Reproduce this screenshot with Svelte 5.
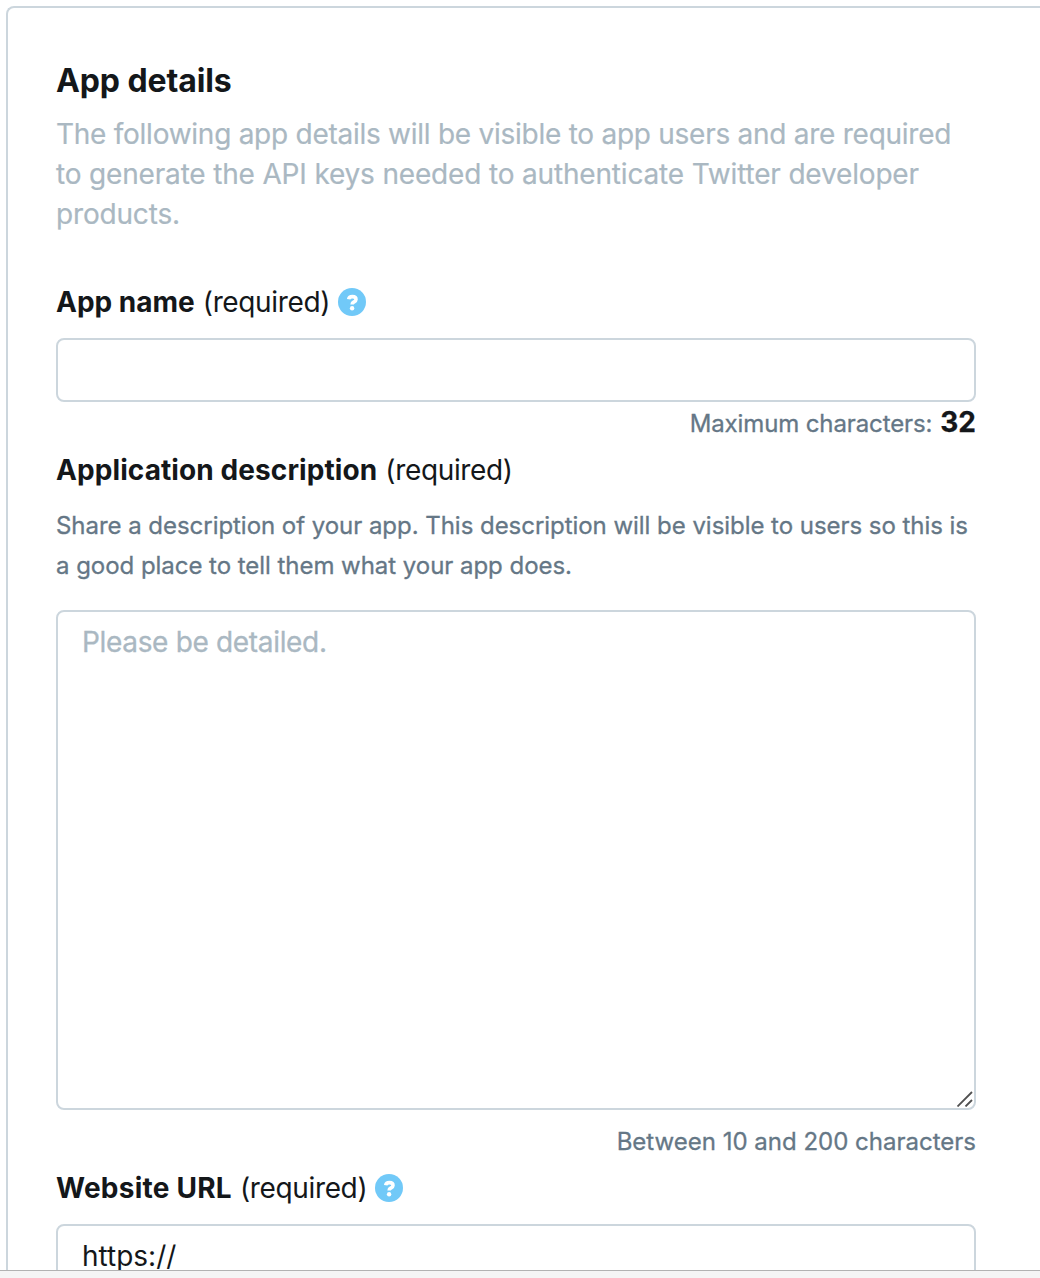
<script>
  let appName = $state('');
  let description = $state('');
  let url = $state('https://');
</script>

{#snippet help()}
  <svg class="help" viewBox="0 0 28 28" aria-hidden="true">
    <circle cx="14" cy="14" r="14" fill="#71c9f8" />
    <path d="M10.7 11.3C11 9.5 12.3 8.6 14.4 8.6c2.2 0 3.6 1.1 3.6 2.8 0 2.7-3.9 2.3-3.9 5" fill="none" stroke="#fff" stroke-width="3.6" stroke-linejoin="round" />
    <circle cx="14.1" cy="20.2" r="2.2" fill="#fff" />
  </svg>
{/snippet}

<main>
  <section class="card">
    <h1>App details</h1>
    <p class="intro">
      <span class="first">The following app details will be visible to app users and are required</span>
      <span>to generate the API keys needed to authenticate Twitter developer</span>
      <span>products.</span>
    </p>

    <div class="label"><label for="name">App name</label><span class="req">(required)</span>{@render help()}</div>
    <input id="name" bind:value={appName} />
    <div class="hint max"><span>Maximum characters:</span><b>32</b></div>

    <div class="label"><label class="long" for="desc">Application description</label><span class="req">(required)</span></div>
    <p class="note">
      <span>Share a description of your app. This description will be visible to users so this is</span>
      <span>a good place to tell them what your app does.</span>
    </p>
    <div class="area">
      <textarea id="desc" placeholder="Please be detailed." bind:value={description}></textarea>
      <svg class="grip" viewBox="0 0 16 16" aria-hidden="true">
        <path d="M.5 15.5 15 1M8.5 15.5 15 9" stroke="#505050" stroke-width="1.8" fill="none" />
      </svg>
    </div>
    <div class="hint range"><span>Between 10 and 200 characters</span></div>

    <div class="label"><label class="site" for="url">Website URL</label><span class="req">(required)</span>{@render help()}</div>
    <input id="url" bind:value={url} />
  </section>
  <footer></footer>
</main>

<style>
  :global(body) { background: #fff; overflow: hidden; }
  main {
    height: 1278px;
    box-sizing: border-box;
    padding: 6px 0 0 6px;
    display: flex;
    flex-direction: column;
    overflow: hidden;
    font-family: Inter, sans-serif;
    color: #14171a;
  }
  .card {
    flex: 1;
    min-height: 0;
    overflow: hidden;
    border: 2px solid #ccd6dd;
    border-width: 2px 0 0 2px;
    border-top-left-radius: 8px;
    padding: 48px 64px 0 48px;
  }
  h1 { margin: 0; font-size: 32px; line-height: 50px; height: 58px; font-weight: 700; letter-spacing: -0.1px; }
  p { margin: 0; white-space: nowrap; line-height: 40px; }
  p span { display: block; }
  .intro { font-size: 28px; color: #aab8c2; letter-spacing: -0.17px; -webkit-text-stroke: 0.2px; }
  .intro .first { letter-spacing: -0.26px; }
  .label { display: flex; align-items: center; height: 40px; margin-top: 48px; font-size: 28px; white-space: nowrap; }
  .label label { font-weight: 700; }
  .label .long { letter-spacing: 0.09px; }
  .label .site { letter-spacing: 0.24px; }
  .req { margin-left: 8px; letter-spacing: -0.35px; }
  .help { width: 28px; height: 28px; margin-left: 8px; }
  input, textarea {
    display: block;
    box-sizing: border-box;
    width: 920px;
    border: 2px solid #ccd6dd;
    border-radius: 8px;
    padding: 0 24px;
    background: #fff;
    color: inherit;
    font: 28px Inter, sans-serif;
    outline: none;
  }
  input { height: 64px; margin-top: 16px; }
  .hint {
    display: flex;
    justify-content: flex-end;
    align-items: center;
    width: 920px;
    height: 40px;
    font-size: 24px;
    color: #657786;
    white-space: nowrap;
    -webkit-text-stroke: 0.3px;
  }
  .hint b { margin-left: 8px; font-size: 28px; line-height: 34px; color: #14171a; margin-bottom: 2px; }
  .max { padding-bottom: 2px; }
  .max span { letter-spacing: -0.12px; }
  .max + .label { margin-top: 6px; }
  .note { padding-top: 16px; font-size: 24px; letter-spacing: -0.04px; color: #657786; -webkit-text-stroke: 0.3px; }
  .area { position: relative; width: 920px; margin-top: 24px; }
  textarea { height: 500px; padding-top: 10px; line-height: 40px; resize: none; }
  textarea::placeholder { color: #aab8c2; opacity: 1; letter-spacing: -0.33px; -webkit-text-stroke: 0.3px; }
  .grip { position: absolute; right: 3px; bottom: 3px; width: 16px; height: 16px; }
  .hint.max { padding-top: 1px; padding-bottom: 1px; }
  .range { padding-top: 11px; padding-bottom: 1px; }
  .range + .label { margin-top: 6px; }
  footer { height: 7px; margin-left: -6px; border-top: 1px solid #b2b2b2; background: #f5f5f5; }
</style>
